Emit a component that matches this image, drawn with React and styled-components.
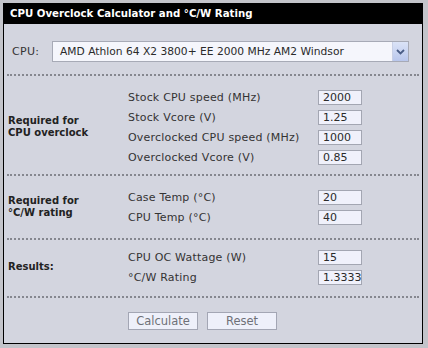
import { createGlobalStyle, styled } from "styled-components";

const GlobalStyle = createGlobalStyle`
  body {
    margin: 0;
    background: #c3c4ca;
    font-family: "DejaVu Sans", Verdana, sans-serif;
  }
`;

const Page = styled.div`
  padding: 3px;
`;
const Panel = styled.div`
  width: 420px;
  box-sizing: border-box;
  border: 1px solid #000;
  background: #d3d5df;
  color: #333;
  font-size: 11px;
`;
const TitleBar = styled.div`
  height: 20px;
  line-height: 20px;
  padding-left: 6px;
  background: #000;
  color: #fff;
  font-weight: bold;
  font-size: 10.2px;
`;
const CpuRow = styled.div`
  display: flex;
  align-items: center;
  gap: 12px;
  padding: 17px 13px 12px 4px;
`;
const CpuLabel = styled.span`
  width: 28px;
  padding-left: 4px;
  letter-spacing: 0.3px;
`;
const SelectBox = styled.div`
  flex: 1;
  display: flex;
  align-items: center;
  height: 21px;
  box-sizing: border-box;
  border: 1px solid #a7aab6;
  background: #f5f6fc;
`;
const SelectText = styled.span`
  flex: 1;
  padding-left: 7px;
  font-size: 10.7px;
  color: #2a2a2a;
`;
const ArrowButton = styled.span`
  display: flex;
  align-items: center;
  justify-content: center;
  width: 15px;
  height: 19px;
  background: linear-gradient(#dbe3f7, #b9c7ec);
  border-left: 1px solid #c8d0e6;
`;
const Divider = styled.div`
  margin: 0 3px;
  border-top: 2px dotted #85878f;
`;
const Section = styled.div`
  display: flex;
  padding: ${(p) => p.$pad};
`;
const SideLabel = styled.div`
  width: 120px;
  padding-left: 4px;
  display: flex;
  align-items: center;
  font-weight: bold;
  font-size: 10px;
  line-height: 12px;
  color: #222;
`;
const Fields = styled.div`
  display: flex;
  flex-direction: column;
`;
const Field = styled.div`
  display: grid;
  grid-template-columns: 190px 44px;
  align-items: center;
  height: 20px;
`;
const FieldName = styled.span`
  letter-spacing: 0.2px;
`;
const NumberBox = styled.div`
  height: 15px;
  line-height: 13px;
  box-sizing: border-box;
  border: 1px solid #a3a6b2;
  background: #f0f1fb;
  padding-left: 4px;
  color: #2a2a2a;
`;
const Footer = styled.div`
  display: flex;
  gap: 9px;
  padding: 14px 0 13px 124px;
`;
const Button = styled.div`
  width: 70px;
  height: 18px;
  box-sizing: border-box;
  border: 1px solid #a3a6b4;
  background: #eef0fa;
  color: #6e7078;
  font-size: 11.5px;
  line-height: 16px;
  text-align: center;
`;

const sections = [
  {
    label: ["Required for", "CPU overclock"],
    pad: "11px 0 7px",
    fields: [
      ["Stock CPU speed (MHz)", "2000"],
      ["Stock Vcore (V)", "1.25"],
      ["Overclocked CPU speed (MHz)", "1000"],
      ["Overclocked Vcore (V)", "0.85"],
    ],
  },
  {
    label: ["Required for", "°C/W rating"],
    pad: "11px 0 11px",
    fields: [
      ["Case Temp (°C)", "20"],
      ["CPU Temp (°C)", "40"],
    ],
  },
  {
    label: ["Results:"],
    pad: "7px 0 9px",
    fields: [
      ["CPU OC Wattage (W)", "15"],
      ["°C/W Rating", "1.3333"],
    ],
  },
];

export default function App() {
  return (
    <>
      <GlobalStyle />
      <Page>
        <Panel>
          <TitleBar>CPU Overclock Calculator and °C/W Rating</TitleBar>
          <CpuRow>
            <CpuLabel>CPU:</CpuLabel>
            <SelectBox>
              <SelectText>AMD Athlon 64 X2 3800+ EE 2000 MHz AM2 Windsor</SelectText>
              <ArrowButton>
                <svg width="9" height="6" viewBox="0 0 9 6">
                  <path d="M1 1 L4.5 4.5 L8 1" fill="none" stroke="#4a5d86" strokeWidth="1.8" />
                </svg>
              </ArrowButton>
            </SelectBox>
          </CpuRow>
          {sections.map((s, i) => (
            <div key={i}>
              <Divider />
              <Section $pad={s.pad}>
                <SideLabel>
                  <div>
                    {s.label.map((line) => (
                      <div key={line}>{line}</div>
                    ))}
                  </div>
                </SideLabel>
                <Fields>
                  {s.fields.map(([name, value]) => (
                    <Field key={name}>
                      <FieldName>{name}</FieldName>
                      <NumberBox>{value}</NumberBox>
                    </Field>
                  ))}
                </Fields>
              </Section>
            </div>
          ))}
          <Divider />
          <Footer>
            <Button>Calculate</Button>
            <Button>Reset</Button>
          </Footer>
        </Panel>
      </Page>
    </>
  );
}
